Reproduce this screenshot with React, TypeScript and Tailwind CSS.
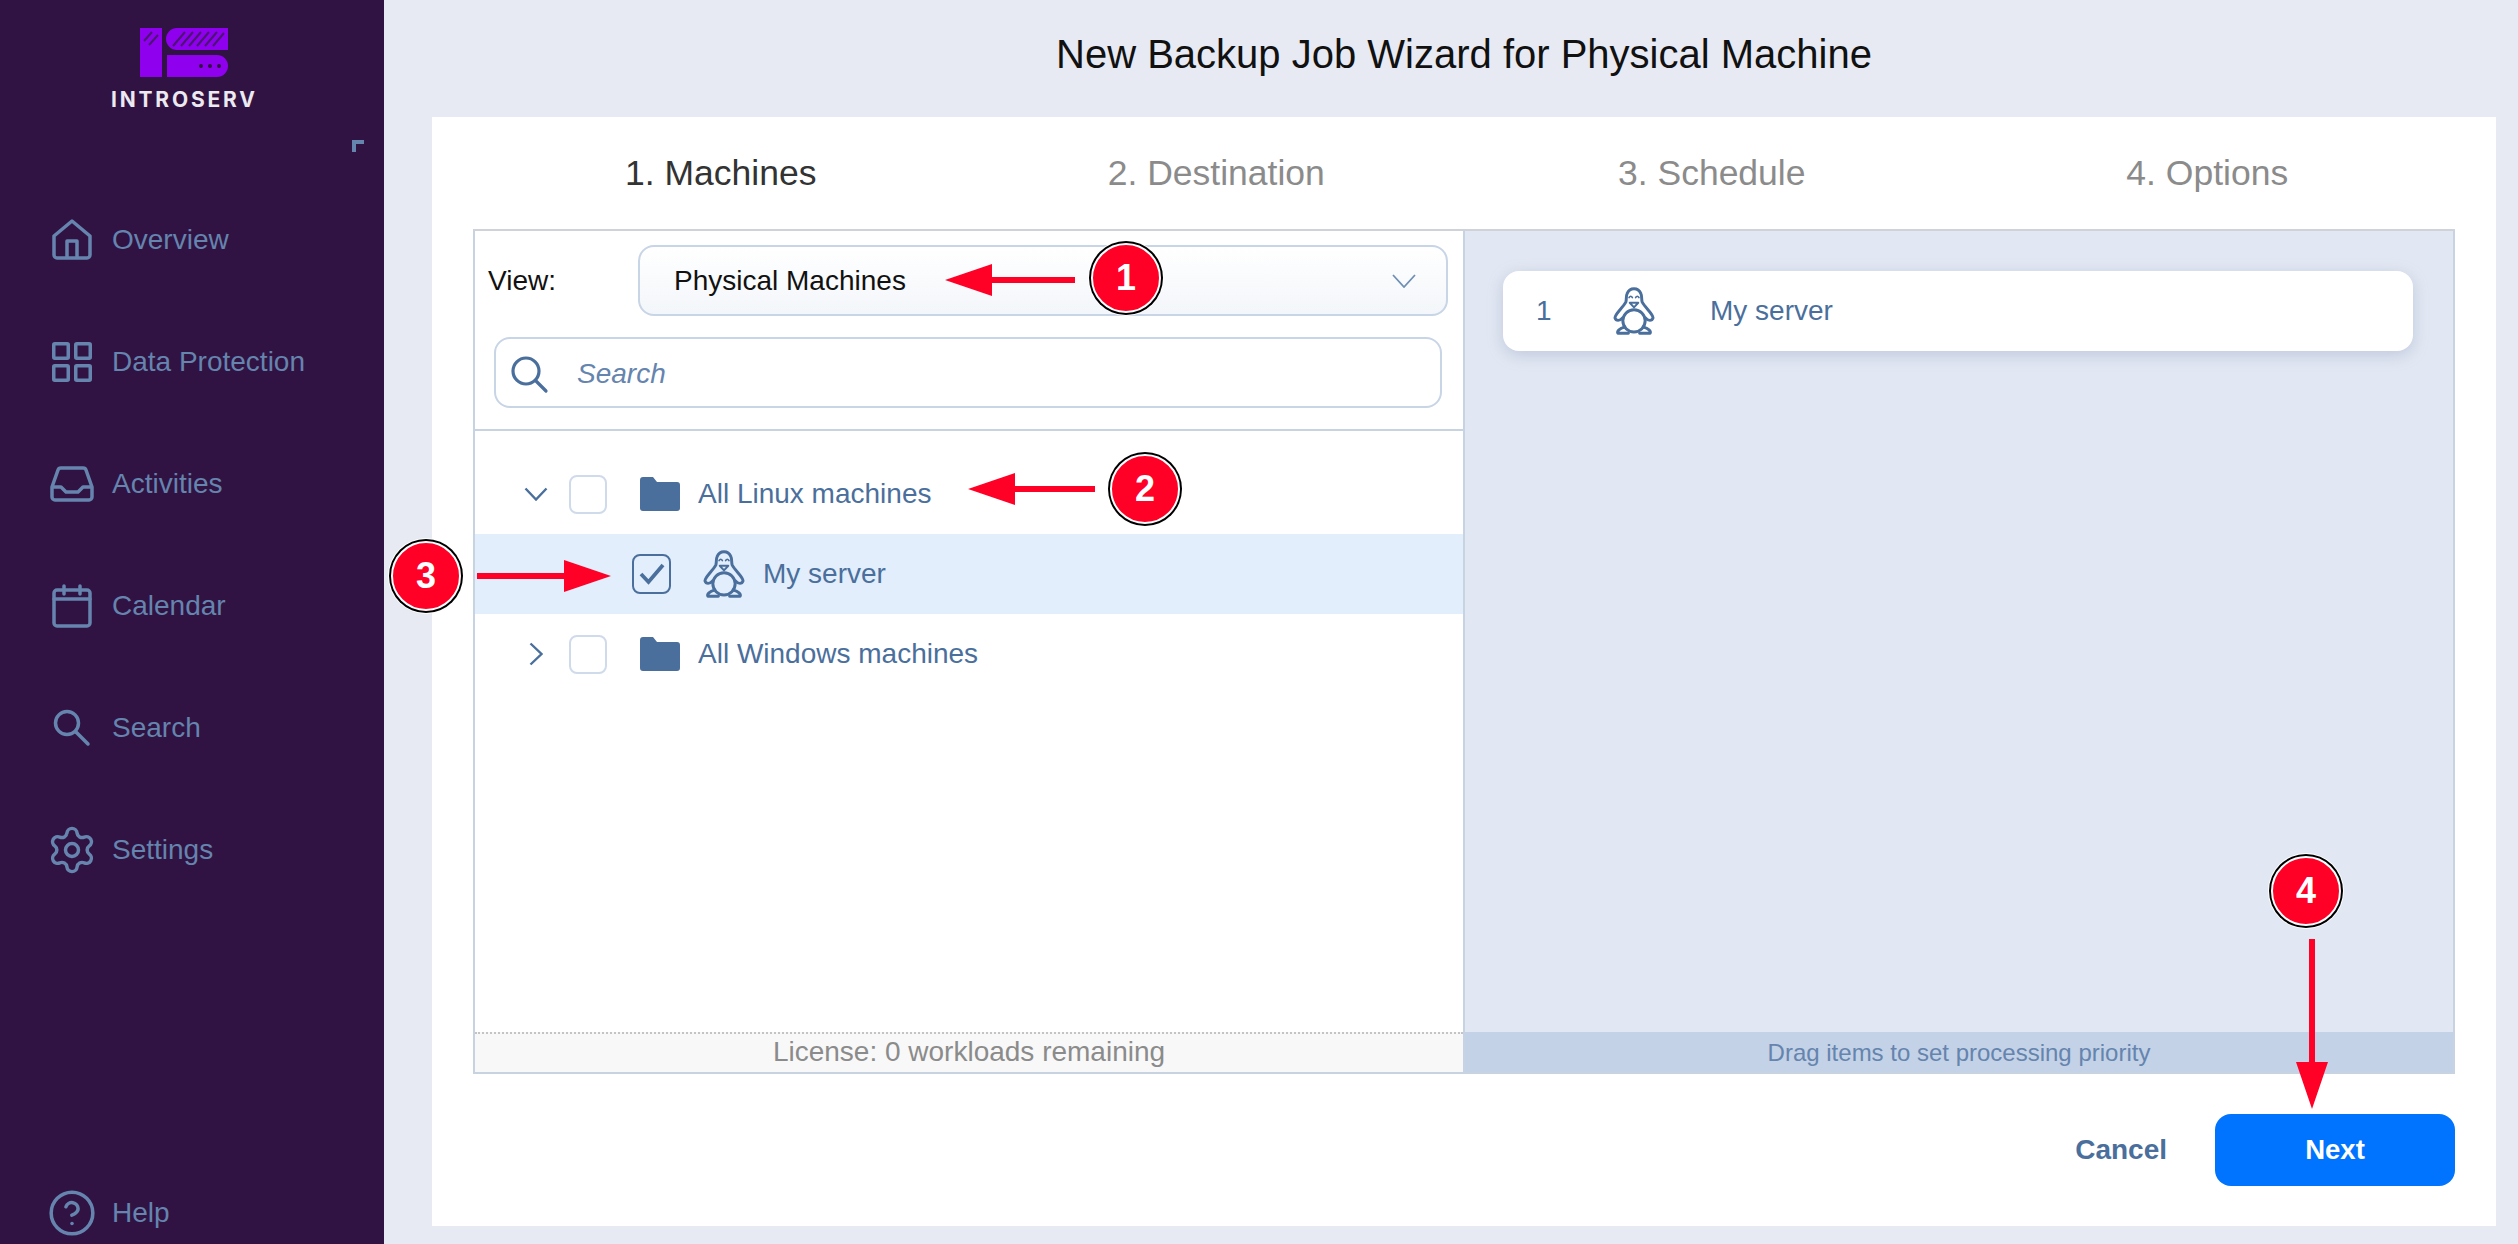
import { CircleHelp, Settings } from "lucide-react";

const navStroke = "#6584ae";
const blue = "#4a6f9c";

function HomeIcon() {
  return (
    <svg width="48" height="48" viewBox="0 0 48 48" fill="none" stroke={navStroke} strokeWidth="3.5" strokeLinejoin="round">
      <path d="M6 20 24 5 42 20V39a3 3 0 0 1-3 3H9a3 3 0 0 1-3-3Z" />
      <path d="M19 42V25H29V42" />
    </svg>
  );
}

function GridIcon() {
  return (
    <svg width="48" height="48" viewBox="0 0 48 48" fill="none" stroke={navStroke} strokeWidth="3.5">
      <rect x="5.75" y="5.75" width="14.5" height="14.5" rx="1" />
      <rect x="27.75" y="5.75" width="14.5" height="14.5" rx="1" />
      <rect x="5.75" y="27.75" width="14.5" height="14.5" rx="1" />
      <rect x="27.75" y="27.75" width="14.5" height="14.5" rx="1" />
    </svg>
  );
}

function InboxIcon() {
  return (
    <svg width="48" height="48" viewBox="0 0 48 48" fill="none" stroke={navStroke} strokeWidth="3.5" strokeLinejoin="round">
      <path d="M4 27 10 10a3 3 0 0 1 3-2H35a3 3 0 0 1 3 2L44 27V37a3 3 0 0 1-3 3H7a3 3 0 0 1-3-3Z" />
      <path d="M4 27H13L18 32H30L35 27H44" />
    </svg>
  );
}

function CalendarIcon() {
  return (
    <svg width="48" height="48" viewBox="0 0 48 48" fill="none" stroke={navStroke} strokeWidth="3.5" strokeLinecap="round">
      <rect x="6" y="8" width="36" height="36" rx="3" />
      <path d="M6 17H42M16 4V12M32 4V12" />
    </svg>
  );
}

function SearchIcon() {
  return (
    <svg width="48" height="48" viewBox="0 0 48 48" fill="none" stroke={navStroke} strokeWidth="3.5" strokeLinecap="round">
      <circle cx="19" cy="19" r="11.5" />
      <path d="M28 28 40 40" />
    </svg>
  );
}

function Penguin() {
  return (
    <svg width="44" height="48" viewBox="18 24 134 146" fill="none" stroke={blue} strokeWidth="9" strokeLinejoin="round" strokeLinecap="round">
      <path d="M50 118C42 128 30 128 27 118 27 106 50 88 60 70 63 62 60 52 64 44 68 34 76 29 85 29 94 29 102 34 106 44 110 52 107 62 110 70 120 88 143 106 143 118 140 128 128 128 120 118" />
      <ellipse cx="85" cy="127" rx="34" ry="34" />
      <path d="M56 146C42 150 32 158 36 165H68" />
      <path d="M114 146C128 150 138 158 134 165H102" />
      <path d="M72 72H98L85 86Z" strokeWidth="6" />
      <path d="M70 56Q75 48 80 56M90 56Q95 48 100 56" strokeWidth="5" />
    </svg>
  );
}

function Folder() {
  return (
    <svg width="40" height="34" viewBox="0 0 40 34" fill={blue}>
      <path d="M3 0H13L17 5H37a3 3 0 0 1 3 3V31a3 3 0 0 1-3 3H3a3 3 0 0 1-3-3V3a3 3 0 0 1 3-3Z" />
    </svg>
  );
}

function NavItem({ icon, label, className = "" }: { icon: React.ReactNode; label: string; className?: string }) {
  return (
    <div className={`flex items-center pl-[48px] gap-[16px] text-[28px] text-[#6584ae] ${className}`}>
      {icon}
      <span>{label}</span>
    </div>
  );
}

function Checkbox() {
  return <div className="ml-[8px] w-[38px] h-[39px] rounded-[8px] border-2 border-[#cfdbea] bg-white shrink-0" />;
}

function Badge({ n, className }: { n: number; className: string }) {
  return (
    <div className={`absolute w-[70px] h-[70px] rounded-full bg-[#ff0026] border-2 border-white shadow-[0_0_0_2px_#000,0_0_0_3px_#fff] flex items-center justify-center text-white font-bold text-[36px] ${className}`}>
      {n}
    </div>
  );
}

export default function App() {
  return (
    <div className="relative flex w-[2518px] h-[1244px] overflow-hidden bg-[#e7eaf3] font-['Liberation_Sans',Arial,sans-serif]">
      {/* sidebar */}
      <aside className="w-[384px] shrink-0 bg-[#301342] flex flex-col">
        <div className="pt-[28px] pl-[112px]">
          <svg className="ml-[28px]" width="88" height="49" viewBox="0 0 88 49">
            <rect x="0" y="0" width="22" height="49" fill="#8f00ee" />
            <path d="M37 0H88V22H37a11 11 0 0 1 0-22Z" fill="#8f00ee" />
            <path d="M27 27H77a11 11 0 0 1 0 22H27Z" fill="#8f00ee" />
            <g stroke="#4a1570" strokeWidth="2">
              <path d="M4 13 12 4M9 17 18 7" />
              <path d="M33 18 45 4M41 18 53 4M49 18 61 4M57 18 69 4M65 18 77 4M73 18 84 5" />
            </g>
            <circle cx="61" cy="38" r="2" fill="#301342" />
            <circle cx="70" cy="38" r="2" fill="#301342" />
            <circle cx="79" cy="38" r="2" fill="#301342" />
          </svg>
          <div className="mt-[15px] -ml-[1px] h-[16px] font-['Inter',sans-serif] font-bold text-[21px] leading-[16px] tracking-[2.8px] text-[#ece9f0] whitespace-nowrap">
            INTROSERV
          </div>
        </div>
        <div className="mt-[32px] ml-[352px] w-[12px] h-[12px] border-t-4 border-l-4 border-[#6584ae]" />
        <nav className="mt-[27px] flex flex-col">
          <NavItem className="h-[122px]" icon={<HomeIcon />} label="Overview" />
          <NavItem className="h-[122px]" icon={<GridIcon />} label="Data Protection" />
          <NavItem className="h-[122px]" icon={<InboxIcon />} label="Activities" />
          <NavItem className="h-[122px]" icon={<CalendarIcon />} label="Calendar" />
          <NavItem className="h-[122px]" icon={<SearchIcon />} label="Search" />
          <NavItem className="h-[122px]" icon={<Settings className="-mx-[2px]" size={52} strokeWidth={1.6} color={navStroke} />} label="Settings" />
        </nav>
        <NavItem className="mt-auto h-[64px] pt-[2px]" icon={<CircleHelp className="-mx-[1px]" size={50} strokeWidth={1.7} color={navStroke} />} label="Help" />
      </aside>

      {/* main */}
      <main className="flex-1 flex flex-col pl-[48px] pr-[22px] pb-[18px]">
        <h1 className="h-[117px] pb-[10px] flex items-center justify-center text-[40px] font-normal text-[#111]">
          New Backup Job Wizard for Physical Machine
        </h1>
        <div className="flex-1 bg-white px-[41px] flex flex-col">
          <div className="h-[112px] grid grid-cols-4 items-center text-center text-[35.5px] text-[#8b8b8b] pt-[2px]">
            <div className="text-[#333]">1. Machines</div>
            <div>2. Destination</div>
            <div>3. Schedule</div>
            <div>4. Options</div>
          </div>

          <div className="h-[845px] flex border-2 border-[#c8d3e2] border-t-[#cfd2d8]">
            <div className="w-[990px] flex flex-col border-r-2 border-[#c8d3e2]">
              <div className="pt-[14px] pb-[21px] border-b-2 border-[#c8d3e2]">
                <div className="flex items-center pl-[13px] pr-[15px]">
                  <span className="w-[150px] text-[28px] text-[#111]">View:</span>
                  <div className="flex-1 h-[71px] rounded-[16px] border-2 border-[#c8d5e6] bg-linear-to-b from-white to-[#f3f6fa] flex items-center justify-between pl-[34px] pr-[30px] text-[28px] text-[#111]">
                    <span>Physical Machines</span>
                    <svg width="24" height="14" viewBox="0 0 24 14" fill="none" stroke="#6f8fb5" strokeWidth="1.8"><path d="M1 1 12 13 23 1" /></svg>
                  </div>
                </div>
                <div className="mt-[21px] ml-[19px] mr-[21px] h-[71px] rounded-[16px] border-2 border-[#c8d5e6] flex items-center pl-[13px] pt-[3px]">
                  <svg width="40" height="40" viewBox="0 0 40 40" fill="none" stroke={blue} strokeWidth="3.2" strokeLinecap="round">
                    <circle cx="17" cy="17" r="13" />
                    <path d="M27 27 37 37" />
                  </svg>
                  <span className="ml-[28px] italic text-[28px] text-[#6584ae]">Search</span>
                </div>
              </div>

              <div className="flex-1 pt-[23px] text-[28px] text-[#4a6f9c]">
                <div className="h-[80px] flex items-center pl-[36px]">
                  <div className="w-[50px] flex justify-center">
                    <svg width="24" height="14" viewBox="0 0 24 14" fill="none" stroke={blue} strokeWidth="2.4"><path d="M1.5 1.5 12 12.5 22.5 1.5" /></svg>
                  </div>
                  <Checkbox />
                  <div className="ml-[33px]"><Folder /></div>
                  <span className="ml-[18px]">All Linux machines</span>
                </div>
                <div className="h-[80px] flex items-center pl-[157px] bg-[#e2eefb]">
                  <div className="w-[39px] h-[40px] rounded-[8px] border-2 border-[#4a6f9c] flex items-center justify-center">
                    <svg width="26" height="22" viewBox="0 0 26 22" fill="none" stroke={blue} strokeWidth="3.8"><path d="M2 11 9.5 19 24 2" /></svg>
                  </div>
                  <div className="ml-[31px]"><Penguin /></div>
                  <span className="ml-[17px]">My server</span>
                </div>
                <div className="h-[80px] flex items-center pl-[36px]">
                  <div className="w-[50px] flex justify-center">
                    <svg width="14" height="24" viewBox="0 0 14 24" fill="none" stroke={blue} strokeWidth="2.4"><path d="M1.5 1.5 12.5 12 1.5 22.5" /></svg>
                  </div>
                  <Checkbox />
                  <div className="ml-[33px]"><Folder /></div>
                  <span className="ml-[18px]">All Windows machines</span>
                </div>
              </div>

              <div className="h-[40px] pb-[3px] bg-[#f8f8f8] border-t-2 border-dotted border-[#c4c4c4] flex items-center justify-center text-[28px] text-[#8b8b8b]">
                License: 0 workloads remaining
              </div>
            </div>

            <div className="flex-1 flex flex-col bg-[#e2e8f3]">
              <div className="flex-1 pt-[40px] pl-[38px] pr-[40px]">
                <div className="h-[80px] rounded-[16px] bg-white shadow-[0_4px_16px_rgba(100,120,160,0.28)] flex items-center pl-[33px] text-[28px] text-[#4a6f9c]">
                  <span className="w-[76px]">1</span>
                  <Penguin />
                  <span className="ml-[54px]">My server</span>
                </div>
              </div>
              <div className="h-[40px] pt-[2px] bg-[#c3d2e6] flex items-center justify-center text-[24px] text-[#6584ae]">
                Drag items to set processing priority
              </div>
            </div>
          </div>

          <div className="mt-[40px] flex items-center justify-end gap-[48px]">
            <span className="text-[28px] font-bold text-[#4a6f9c]">Cancel</span>
            <div className="w-[240px] h-[72px] rounded-[16px] bg-[#0073ff] flex items-center justify-center text-[27.5px] font-bold text-white">
              Next
            </div>
          </div>
        </div>
      </main>

      {/* numbered callouts over the shot */}
      <svg className="absolute left-[945px] top-[264px]" width="130" height="32" fill="#ff0026"><polygon points="0,16 47,0 47,13 130,13 130,19 47,19 47,32" /></svg>
      <svg className="absolute left-[968px] top-[473px]" width="127" height="32" fill="#ff0026"><polygon points="0,16 47,0 47,13 127,13 127,19 47,19 47,32" /></svg>
      <svg className="absolute left-[477px] top-[560px]" width="134" height="32" fill="#ff0026"><polygon points="134,16 87,0 87,13 0,13 0,19 87,19 87,32" /></svg>
      <svg className="absolute left-[2296px] top-[939px]" width="32" height="170" fill="#ff0026"><polygon points="16,170 0,123 13,123 13,0 19,0 19,123 32,123" /></svg>
      <Badge n={1} className="left-[1091px] top-[243px]" />
      <Badge n={2} className="left-[1110px] top-[454px]" />
      <Badge n={3} className="left-[391px] top-[541px]" />
      <Badge n={4} className="left-[2271px] top-[856px]" />
    </div>
  );
}
